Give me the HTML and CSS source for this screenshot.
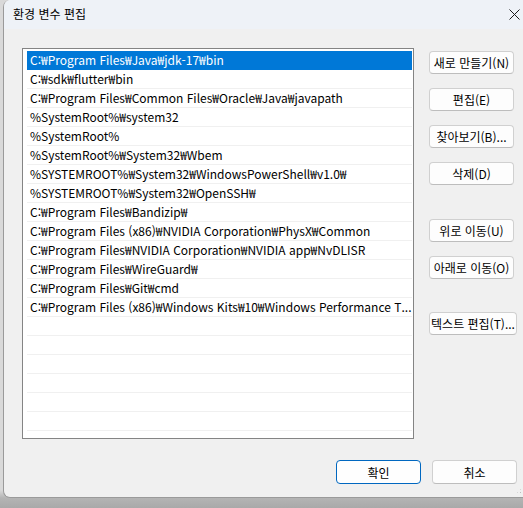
FILE: index.html
```html
<!DOCTYPE html>
<html lang="ko">
<head>
<meta charset="utf-8">
<title>환경 변수 편집</title>
<link rel="stylesheet" href="styles.css">
</head>
<body>
<div class="desktop">
  <div class="window">
    <div class="titlebar">
      <span class="title">환경 변수 편집</span>
      <span class="close" aria-label="닫기">
        <svg width="11" height="11" viewBox="0 0 11 11"><path d="M0.5 0.5 L10.5 10.5 M10.5 0.5 L0.5 10.5" stroke="#1a1a1a" stroke-width="1" fill="none"/></svg>
      </span>
    </div>
    <div class="content">
      <div class="main">
        <div class="list">
          <div class="row selected">C:₩Program Files₩Java₩jdk-17₩bin</div>
          <div class="row">C:₩sdk₩flutter₩bin</div>
          <div class="row">C:₩Program Files₩Common Files₩Oracle₩Java₩javapath</div>
          <div class="row">%SystemRoot%₩system32</div>
          <div class="row">%SystemRoot%</div>
          <div class="row">%SystemRoot%₩System32₩Wbem</div>
          <div class="row">%SYSTEMROOT%₩System32₩WindowsPowerShell₩v1.0₩</div>
          <div class="row">%SYSTEMROOT%₩System32₩OpenSSH₩</div>
          <div class="row">C:₩Program Files₩Bandizip₩</div>
          <div class="row">C:₩Program Files (x86)₩NVIDIA Corporation₩PhysX₩Common</div>
          <div class="row">C:₩Program Files₩NVIDIA Corporation₩NVIDIA app₩NvDLISR</div>
          <div class="row">C:₩Program Files₩WireGuard₩</div>
          <div class="row">C:₩Program Files₩Git₩cmd</div>
          <div class="row">C:₩Program Files (x86)₩Windows Kits₩10₩Windows Performance T...</div>
          <div class="row"></div>
          <div class="row"></div>
          <div class="row"></div>
          <div class="row"></div>
          <div class="row"></div>
          <div class="row"></div>
          <div class="row"></div>
        </div>
        <div class="actions">
          <div class="group">
            <button class="btn">새로 만들기(N)</button>
            <button class="btn">편집(E)</button>
            <button class="btn">찾아보기(B)...</button>
            <button class="btn">삭제(D)</button>
          </div>
          <div class="group group-move">
            <button class="btn">위로 이동(U)</button>
            <button class="btn">아래로 이동(O)</button>
          </div>
          <div class="group group-text">
            <button class="btn btn-wide">텍스트 편집(T)...</button>
          </div>
        </div>
      </div>
      <div class="footer">
        <button class="btn btn-footer btn-primary">확인</button>
        <button class="btn btn-footer">취소</button>
      </div>
    </div>
    <div class="grip"></div>
  </div>
</div>
</body>
</html>
```
FILE: styles.css
```css
* { box-sizing: border-box; }
html, body {
  margin: 0;
  padding: 0;
  width: 523px;
  height: 508px;
  overflow: hidden;
}
body {
  background: linear-gradient(to bottom, #d9d9d9 0, #d9d9d9 490px, #b4b4b4 498px, #a9a9a9 508px);
  font-family: "Noto Sans CJK KR", "Noto Sans", sans-serif;
  font-size: 12px;
  color: #000;
}
.desktop {
  padding-left: 3px;
  height: 508px;
}
.window {
  position: relative;
  width: 522px;
  height: 498px;
  background: #f0f0f0;
  border-left: 1px solid #9a9a9a;
  border-bottom: 1px solid #9a9a9a;
  border-radius: 7px 0 0 7px;
  overflow: hidden;
  display: flex;
  flex-direction: column;
}
.titlebar {
  height: 29px;
  background: #eef2f7;
  display: flex;
  align-items: center;
  justify-content: space-between;
  padding: 0 5px 0 9px;
}
.title {
  font-size: 12px;
  line-height: 16px;
  color: #000;
  margin-top: -1px;
}
.close {
  display: flex;
  width: 11px;
  height: 11px;
  margin-right: 0;
}
.content {
  flex: 1;
  padding: 19px 8px 0 18px;
  display: flex;
  flex-direction: column;
}
.main {
  display: flex;
  gap: 15px;
}
.list {
  width: 392px;
  height: 391px;
  background: #fff;
  border: 1px solid #848484;
  padding: 2px 1px 0 4px;
  overflow: hidden;
}
.row {
  height: 19px;
  line-height: 18px;
  border-bottom: 1px solid #f0f0f0;
  padding-left: 3px;
  white-space: nowrap;
  overflow: hidden;
  color: #000;
}
.row.selected {
  background: #0078d7;
  color: #fff;
  border-bottom-color: #0078d7;
}
.actions {
  display: flex;
  flex-direction: column;
  padding-top: 3px;
}
.group {
  display: flex;
  flex-direction: column;
  gap: 14px;
}
.group-move { margin-top: 34px; }
.group-text { margin-top: 33px; }
.btn {
  width: 85px;
  height: 23px;
  padding: 0;
  background: #fdfdfd;
  border: 1px solid #d0d0d0;
  border-bottom-color: #bdbdbd;
  border-radius: 4px;
  font-family: "Noto Sans CJK KR", "Noto Sans", sans-serif;
  font-size: 12px;
  line-height: 20px;
  color: #000;
  white-space: nowrap;
  overflow: hidden;
  text-align: center;
}
.btn-wide { width: 88px; }
.footer {
  display: flex;
  justify-content: flex-end;
  gap: 11px;
  margin-top: 21px;
  padding-right: 0;
}
.btn-footer {
  height: 24px;
  line-height: 21px;
}
.btn-primary {
  border: 1.5px solid #0067c0;
  background: #fefefe;
}
.grip {
  position: absolute;
  right: 3px;
  bottom: 3px;
  width: 6px;
  height: 6px;
  background:
    radial-gradient(circle, #bdbdbd 0.8px, transparent 1px) 0 0 / 3px 3px;
  clip-path: polygon(100% 0, 100% 100%, 0 100%);
}
```
